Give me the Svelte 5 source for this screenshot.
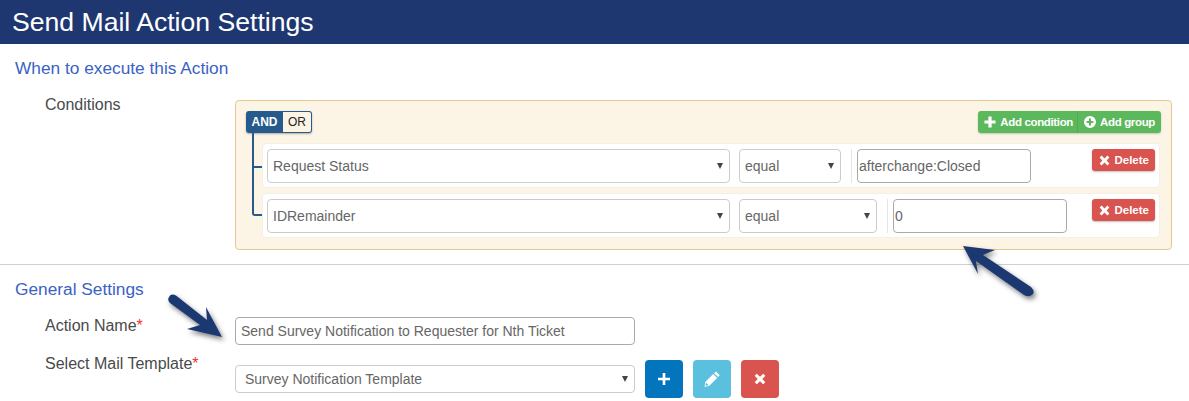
<script>
    const rows = [
        { field: 'Request Status', op: 'equal', opW: 102, value: 'afterchange:Closed' },
        { field: 'IDRemainder', op: 'equal', opW: 138, value: '0' }
    ];
</script>

<div class="page">
    <header class="title">Send Mail Action Settings</header>

    <h2 class="section first">When to execute this Action</h2>

    <div class="cond-row">
        <div class="label">Conditions</div>
        <div class="builder">
            <div class="group-head">
                <div class="and-or">
                    <span class="and">AND</span><span class="or">OR</span>
                </div>
                <div class="add-btns">
                    <button class="add">
                        <svg width="12" height="12" viewBox="0 0 12 12"><path d="M4.4 0.5h3.2v3.9h3.9v3.2H7.6v3.9H4.4V7.6H0.5V4.4h3.9z" fill="#fff" /></svg>
                        Add condition
                    </button><button class="add second">
                        <svg width="12" height="12" viewBox="0 0 12 12"><path fill-rule="evenodd" d="M6 0a6 6 0 1 0 0 12A6 6 0 0 0 6 0zM5 2.6h2V5h2.4v2H7v2.4H5V7H2.6V5H5z" fill="#fff" /></svg>
                        Add group
                    </button>
                </div>
            </div>

            <div class="rules">
                {#each rows as r}
                    <div class="rule">
                        <div class="select field">
                            <span>{r.field}</span><i class="caret"></i>
                        </div>
                        <div class="select op" style="width: {r.opW}px">
                            <span>{r.op}</span><i class="caret"></i>
                        </div>
                        <div class="sep"></div>
                        <div class="value">{r.value}</div>
                        <button class="del">
                            <svg width="11" height="11" viewBox="0 0 11 11"><path d="M2.6 0.6L5.5 3.4 8.4 0.6l2 2L7.6 5.5l2.8 2.9-2 2L5.5 7.6l-2.9 2.8-2-2L3.4 5.5 0.6 2.6z" fill="#fff" /></svg>
                            Delete
                        </button>
                    </div>
                {/each}
            </div>
        </div>
    </div>

    <hr class="rule-line" />

    <h2 class="section">General Settings</h2>

    <div class="form-row name-row">
        <div class="label">Action Name<em>*</em></div>
        <div class="text-input">Send Survey Notification to Requester for Nth Ticket</div>
    </div>

    <div class="form-row tpl-row">
        <div class="label">Select Mail Template<em>*</em></div>
        <div class="select tpl"><span>Survey Notification Template</span><i class="caret dark"></i></div>
        <div class="actions">
            <button class="sq blue" aria-label="add">
                <svg width="12" height="12" viewBox="1 1 10 10"><path d="M4.9 1h2.2v3.9H11v2.2H7.1V11H4.9V7.1H1V4.9h3.9z" fill="#fff" /></svg>
            </button>
            <button class="sq cyan" aria-label="edit">
                <svg width="16" height="16" viewBox="0.6 1 14.4 14"><path d="M11.3 1.2l3.5 3.5-1.6 1.6-3.5-3.5zM8.9 3.6l3.5 3.5-7.2 7.2-4.1.6.6-4.1zM2.4 11.2l-.5 2.9 2.9-.5z" fill="#fff" fill-rule="evenodd" /></svg>
            </button>
            <button class="sq red" aria-label="remove">
                <svg width="12" height="12" viewBox="0 0 11 11"><path d="M2.6 0.6L5.5 3.4 8.4 0.6l2 2L7.6 5.5l2.8 2.9-2 2L5.5 7.6l-2.9 2.8-2-2L3.4 5.5 0.6 2.6z" fill="#fff" /></svg>
            </button>
        </div>
    </div>

    <!-- annotation arrows drawn over the screenshot -->
    <svg class="arrow arrow-a" width="90" height="80" viewBox="0 0 90 80">
        <defs>
            <filter id="sh" x="-30%" y="-30%" width="170%" height="170%">
                <feDropShadow dx="2" dy="3" stdDeviation="2.5" flood-color="#000" flood-opacity="0.5" />
            </filter>
        </defs>
        <path d="M62 49 L46 19 L47 32 L16 7.5 Q11 5 9 9 Q7 12 10 15 L40 37 L27 41 Z" fill="#1f3771" filter="url(#sh)" />
    </svg>
    <svg class="arrow arrow-b" width="90" height="70" viewBox="0 0 90 70">
        <path d="M8 6 L40 10 L28 15 L76 47 Q80 51 78 54 Q74 58 69 55 L21 21 L23 34 Z" fill="#1f3771" filter="url(#sh)" />
    </svg>
</div>

<style>
    :global(body) {
        margin: 0;
        background: #fff;
    }

    .page {
        position: relative;
        width: 1189px;
        height: 401px;
        overflow: hidden;
        font-family: "Liberation Sans", Arial, sans-serif;
        color: #555;
    }

    .title {
        height: 44px;
        line-height: 44px;
        padding-left: 12px;
        background: #1f3771;
        color: #fff;
        font-size: 26.6px;
    }

    .section {
        margin: 0 0 0 15px;
        font-weight: normal;
        font-size: 17.3px;
        line-height: 20px;
        color: #3a62c4;
    }

    .section.first {
        padding-top: 14px;
    }

    .label {
        width: 190px;
        padding-left: 45px;
        flex: none;
        font-size: 16px;
        line-height: 20px;
        color: #4a4a4a;
    }

    .label em {
        color: #e33;
        font-style: normal;
    }

    .cond-row {
        display: flex;
        margin-top: 17px;
    }

    .builder {
        width: 935px;
        height: 148px;
        margin-top: 5px;
        border: 1px solid #e4c88f;
        border-radius: 4px;
        background: #fcf5e6;
    }

    .group-head {
        display: flex;
        justify-content: space-between;
        padding: 10px 10px 0;
    }

    .and-or {
        display: flex;
        height: 22px;
        border-radius: 3px;
        box-shadow: 0 1px 2px rgba(0, 0, 0, 0.3);
        font-size: 12px;
    }

    .and {
        width: 37px;
        text-align: center;
        font-weight: bold;
        line-height: 22px;
        color: #fff;
        background: #265a8c;
        border-radius: 3px 0 0 3px;
    }

    .or {
        width: 29px;
        box-sizing: border-box;
        text-align: center;
        line-height: 20px;
        color: #222;
        background: #fcf5e6;
        border: 1px solid #265a8c;
        border-left: 0;
        border-radius: 0 3px 3px 0;
    }

    .add-btns {
        display: flex;
        box-shadow: 0 1px 2px rgba(0, 0, 0, 0.2);
        border-radius: 3px;
    }

    button {
        font-family: inherit;
        border: 0;
        padding: 0;
    }

    .add {
        display: flex;
        align-items: center;
        gap: 4px;
        height: 22px;
        padding: 0 4px 0 6px;
        background: #5cb85c;
        color: #fff;
        font-size: 11.5px;
        font-weight: bold;
        letter-spacing: -0.35px;
        border-radius: 3px 0 0 3px;
    }

    .add.second {
        padding: 0 6px;
        border-left: 1px solid #4cae4c;
        border-radius: 0 3px 3px 0;
    }

    .rules {
        position: relative;
        margin: 10px 11px 0 26px;
    }

    /* bracket linking the AND/OR toggle to each rule */
    .rules::before {
        content: "";
        position: absolute;
        left: -10px;
        top: -10px;
        width: 9px;
        height: 81px;
        border-left: 2px solid #265a8c;
        border-bottom: 2px solid #265a8c;
        border-bottom-left-radius: 3px;
    }

    .rule {
        position: relative;
        display: flex;
        align-items: flex-start;
        box-sizing: border-box;
        height: 45px;
        margin-bottom: 5px;
        padding: 5px 0 0 4px;
        background: #fff;
        border: 1px solid #f5f0e4;
        border-radius: 4px;
    }

    .rule:first-child::before {
        content: "";
        position: absolute;
        left: -11px;
        top: 22px;
        width: 10px;
        border-top: 2px solid #265a8c;
    }

    .select {
        position: relative;
        box-sizing: border-box;
        height: 34px;
        line-height: 32px;
        padding-left: 5px;
        border: 1px solid #ccc;
        border-radius: 4px;
        background: #fff;
        font-size: 14px;
        color: #666;
    }

    .field {
        width: 463px;
    }

    .op {
        margin-left: 9px;
    }

    .caret {
        position: absolute;
        right: 6px;
        top: 13px;
        border-left: 3px solid transparent;
        border-right: 3px solid transparent;
        border-top: 6px solid #444;
    }

    .sep {
        width: 1px;
        height: 34px;
        margin: 0 5px 0 10px;
        background: #e5e5e5;
    }

    .value {
        box-sizing: border-box;
        width: 174px;
        height: 34px;
        line-height: 32px;
        padding-left: 1px;
        border: 1px solid #aaa;
        border-radius: 4px;
        font-size: 14px;
        color: #666;
    }

    .del {
        position: absolute;
        right: 4px;
        top: 5px;
        display: flex;
        align-items: center;
        gap: 4px;
        height: 22px;
        padding: 0 6px 0 7px;
        border-radius: 3px;
        background: #d9534f;
        color: #fff;
        font-size: 11.5px;
        font-weight: bold;
        box-shadow: 0 1px 2px rgba(0, 0, 0, 0.25);
    }

    .rule-line {
        margin: 14px 0 0;
        border: 0;
        border-top: 1px solid #d4ced2;
    }

    .rule-line + .section {
        margin-top: 14px;
    }

    .form-row {
        display: flex;
    }

    .name-row {
        margin-top: 17px;
    }

    .text-input {
        box-sizing: border-box;
        width: 400px;
        height: 28px;
        margin-top: 1px;
        line-height: 26px;
        padding-left: 5px;
        border: 1px solid #aaa;
        border-radius: 4px;
        font-size: 14px;
        color: #666;
    }

    .tpl-row {
        margin-top: 9px;
    }

    .tpl {
        width: 400px;
        height: 28px;
        line-height: 26px;
        padding-left: 9px;
        margin-top: 11px;
        font-size: 14px;
    }

    .tpl .caret {
        top: 10px;
    }

    .actions {
        display: flex;
        gap: 10px;
        margin: 6px 0 0 10px;
    }

    .sq {
        display: flex;
        align-items: center;
        justify-content: center;
        width: 38px;
        height: 38px;
        border-radius: 4px;
    }

    .blue {
        background: #0275bd;
    }

    .cyan {
        background: #5bc0de;
    }

    .red {
        background: #d9534f;
    }

    .arrow {
        position: absolute;
        overflow: visible;
    }

    .arrow-a {
        left: 160px;
        top: 288px;
    }

    .arrow-b {
        left: 955px;
        top: 240px;
    }
</style>
